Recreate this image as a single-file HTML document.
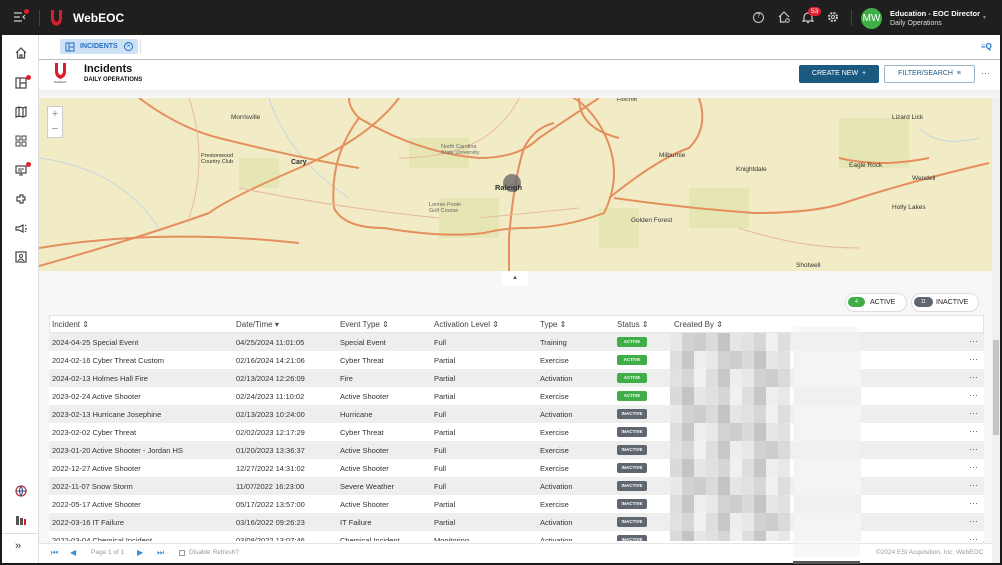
<!DOCTYPE html>
<html><head><meta charset="utf-8"><style>
*{box-sizing:border-box;margin:0;padding:0}
body{width:1002px;height:565px;overflow:hidden;background:#1a1a1a;font-family:"Liberation Sans",sans-serif;position:relative}
.abs{position:absolute}
.top{left:0;top:0;width:1002px;height:35px;background:#1f1f1f;color:#fff}
.side{left:2px;top:35px;width:37px;height:528px;background:#fff;border-right:1px solid #ddd}
.main{left:39px;top:35px;width:961px;height:528px;background:#fff}
.ic{position:absolute;left:12px;width:14px;height:14px}
.dot{position:absolute;width:5px;height:5px;border-radius:50%;background:#e0202e}
.row{position:absolute;left:49px;width:935px;height:18px;font-size:7.5px;color:#333}
.row span{position:absolute;top:5px;white-space:nowrap}
.badge{position:absolute;top:4px!important;left:568px;width:30px;height:10px;border-radius:2px;color:#fff;font-size:4.5px!important;font-weight:bold;text-align:center;line-height:10px}
.ml{position:absolute;font-size:6.5px;color:#333;white-space:nowrap}
</style></head><body>
<div class="abs top">
 <svg class="abs" style="left:14px;top:12px" width="12" height="10"><path d="M0 1h8M0 5h6M0 9h8M11 3l-2 2 2 2" stroke="#ccc" stroke-width="1.2" fill="none"/></svg>
 <div class="dot" style="left:24px;top:9px"></div>
 <div class="abs" style="left:39px;top:10px;width:1px;height:16px;background:#444"></div>
 <svg class="abs" style="left:51px;top:10px" width="11" height="16"><path d="M0 0h3v8q0 3 2.5 4q2.5-1 2.5-4V0h3v9q0 5-5.5 7Q0 14 0 9z" fill="#d71f2b"/></svg>
 <div class="abs" style="left:73px;top:11px;font-size:12px;font-weight:bold">WebEOC</div>
 <div class="abs" style="left:753px;top:12px;width:11px;height:11px;border:1.3px solid #ccc;border-radius:50%;font-size:7px;text-align:center;line-height:8px;color:#ccc">?</div>
 <svg class="abs" style="left:778px;top:11px" width="12" height="12"><path d="M1 6l5-5 5 5M2.5 5v6h5" stroke="#ccc" stroke-width="1.2" fill="none"/><circle cx="9.5" cy="9.5" r="1.8" stroke="#ccc" fill="none"/></svg>
 <svg class="abs" style="left:802px;top:11px" width="12" height="13"><path d="M2 9V6a4 4 0 018 0v3l1 1H1zM5 11.5h2" stroke="#ccc" stroke-width="1.2" fill="none"/></svg>
 <div class="abs" style="left:808px;top:7px;background:#e0202e;border-radius:6px;font-size:6.5px;padding:1px 3px">53</div>
 <svg class="abs" style="left:827px;top:11px" width="12" height="12"><circle cx="6" cy="6" r="4" stroke="#ccc" stroke-width="2" stroke-dasharray="2 1.2" fill="none"/><circle cx="6" cy="6" r="1.5" stroke="#ccc" fill="none"/></svg>
 <div class="abs" style="left:851px;top:10px;width:1px;height:16px;background:#444"></div>
 <div class="abs" style="left:861px;top:8px;width:21px;height:21px;border-radius:50%;background:#3fae49;font-size:10px;text-align:center;line-height:21px">MW</div>
 <div class="abs" style="left:890px;top:9px;font-size:7.5px;font-weight:bold">Education - EOC Director</div>
 <div class="abs" style="left:890px;top:20px;font-size:7px;color:#ddd">Daily Operations</div>
 <div class="abs" style="left:983px;top:14px;font-size:6px;color:#888">▾</div>
</div>
<div class="abs side">
 <svg class="ic" style="top:11px" viewBox="0 0 14 14"><path d="M2 7l5-5 5 5M3.5 6v6h7V6M6 12V9h2v3" stroke="#444" stroke-width="1.2" fill="none"/></svg>
 <svg class="ic" style="top:41px" viewBox="0 0 14 14"><rect x="2" y="2" width="10" height="10" stroke="#444" stroke-width="1.2" fill="none"/><path d="M6 2v10M6 7h6" stroke="#444" stroke-width="1.2"/></svg>
 <div class="dot" style="left:24px;top:40px"></div>
 <svg class="ic" style="top:70px" viewBox="0 0 14 14"><path d="M2 3l3-1 4 1 3-1v9l-3 1-4-1-3 1zM5 2v10M9 3v9" stroke="#444" stroke-width="1.2" fill="none"/></svg>
 <svg class="ic" style="top:99px" viewBox="0 0 14 14"><rect x="2" y="2" width="4" height="4" stroke="#444" fill="none"/><rect x="8" y="2" width="4" height="4" stroke="#444" fill="none"/><rect x="2" y="8" width="4" height="4" stroke="#444" fill="none"/><rect x="8" y="8" width="4" height="4" stroke="#444" fill="none"/></svg>
 <svg class="ic" style="top:128px" viewBox="0 0 14 14"><rect x="2" y="3" width="10" height="7" stroke="#444" stroke-width="1.2" fill="none"/><path d="M4 6h6M4 8h4M7 10v2M5 12h4" stroke="#444"/></svg>
 <div class="dot" style="left:24px;top:127px"></div>
 <svg class="ic" style="top:157px" viewBox="0 0 14 14"><path d="M3 5h3V3h3v2h2v3H9v3H6V9H3z" stroke="#444" stroke-width="1.2" fill="none"/></svg>
 <svg class="ic" style="top:186px" viewBox="0 0 14 14"><path d="M2 6h3l4-2v7l-4-2H2zM11 5l1-1M11 8h2M11 10l1 1" stroke="#444" stroke-width="1.2" fill="none"/></svg>
 <svg class="ic" style="top:215px" viewBox="0 0 14 14"><rect x="2" y="2" width="10" height="10" stroke="#444" stroke-width="1.2" fill="none"/><circle cx="7" cy="6" r="1.5" stroke="#444" fill="none"/><path d="M4 11q3-4 6 0" stroke="#444" fill="none"/></svg>
 <svg class="ic" style="top:449px" viewBox="0 0 14 14"><circle cx="7" cy="7" r="5" stroke="#c0303a" stroke-width="1.3" fill="none"/><path d="M2 7h10M7 2q-3 5 0 10M7 2q3 5 0 10" stroke="#2b4a8a" fill="none"/></svg>
 <svg class="ic" style="top:478px" viewBox="0 0 14 14"><rect x="2" y="3" width="3" height="9" fill="#555"/><rect x="6" y="5" width="3" height="7" fill="#555"/><rect x="10" y="6" width="2" height="6" fill="#d71f2b"/></svg>
 <div class="abs" style="left:0;top:498px;width:36px;height:1px;background:#ddd"></div>
 <div class="abs" style="left:13px;top:505px;font-size:11px;color:#444">»</div>
</div>
<div class="abs main">
 <div class="abs" style="left:21px;top:4px;width:78px;height:15px;background:#cfe2f5;border-radius:2px"></div>
 <svg class="abs" style="left:26px;top:7px" width="10" height="10"><rect x="1" y="1" width="8" height="8" stroke="#1f6fc4" fill="none"/><path d="M4 1v8M4 5h5" stroke="#1f6fc4"/></svg>
 <div class="abs" style="left:41px;top:8px;font-size:7px;color:#1f6fc4;font-weight:bold">INCIDENTS</div>
 <div class="abs" style="left:85px;top:7px;width:9px;height:9px;border:1px solid #1f6fc4;border-radius:50%;font-size:7px;color:#1f6fc4;line-height:7px;text-align:center">×</div>
 <div class="abs" style="left:101px;top:4px;width:1px;height:15px;background:#ddd"></div>
 <div class="abs" style="left:942px;top:7px;font-size:8px;color:#1f6fc4;font-weight:bold">≡Q</div>
 <div class="abs" style="left:0;top:24px;width:961px;height:1px;background:#bbb"></div>
 <svg class="abs" style="left:16px;top:28px" width="11" height="16"><path d="M0 0h3v8q0 3 2.5 4q2.5-1 2.5-4V0h3v9q0 5-5.5 7Q0 14 0 9z" fill="#d71f2b"/></svg>
 <div class="abs" style="left:15px;top:45px;font-size:3px;color:#333">WebEOC</div>
 <div class="abs" style="left:45px;top:28px;font-size:11px;font-weight:bold;color:#111">Incidents</div>
 <div class="abs" style="left:45px;top:42px;font-size:6px;font-weight:bold;color:#111">DAILY OPERATIONS</div>
 <div class="abs" style="left:760px;top:30px;width:80px;height:18px;background:#1b5a80;border-radius:2px;color:#fff;font-size:7px;line-height:18px;text-align:center">CREATE NEW &nbsp;+</div>
 <div class="abs" style="left:845px;top:30px;width:91px;height:18px;border:1px solid #9bb5c8;border-radius:2px;color:#1b5a80;font-size:7px;line-height:16px;text-align:center">FILTER/SEARCH &nbsp;≡</div>
 <div class="abs" style="left:942px;top:33px;font-size:9px;color:#555">···</div>
 <div class="abs" style="left:0;top:55px;width:961px;height:8px;background:linear-gradient(#eee,#f7f7f7)"></div>
 <div class="abs" style="left:0;top:63px;width:953px;height:173px;background:#f2ecc6;overflow:hidden">
  <svg width="953" height="173" style="position:absolute;left:0;top:0">
   <g fill="#e2e5b0" opacity=".8"><rect x="370" y="40" width="60" height="30"/><rect x="400" y="100" width="60" height="40"/><rect x="200" y="60" width="40" height="30"/><rect x="650" y="90" width="60" height="40"/><rect x="800" y="20" width="70" height="50"/><rect x="560" y="110" width="40" height="40"/></g>
   <g stroke="#b6d3e8" stroke-width=".8" fill="none"><path d="M0 60q80 10 120 70M230 0q20 60 80 100M880 30q20 20 60 10"/></g>
   <g stroke="#e58e5e" stroke-width="2" fill="none">
    <path d="M0 168Q100 140 170 115"/>
    <path d="M170 115Q190 100 260 70 330 40 360 0"/>
    <path d="M310 0q0 10 10 20 -30 40 -25 90 10 20 50 20 60 10 100 5 20-5 40 -5 40 0 80 -15 20-40 0-80 -15-30 -40-40 -20 -10 -40 -10"/>
    <path d="M320 20Q380 55 440 60 480 60 500 40 530 20 560 0"/>
    <path d="M470 173V140q5-60 15-90 10-20 30-25"/>
    <path d="M575 100q70 10 140 15 60 0 90-10 60-20 145-40"/>
    <path d="M540 0q0 30 40 40"/>
    <path d="M0 150q120-20 260-5"/>
    <path d="M100 0q40 30 80 40 80 20 140 30"/>
    <path d="M660 0q10 30 -10 50 -30 10 -80 50"/>
    <path d="M800 60q40 10 90 0"/>
   </g>
   <g stroke="#e9b9a0" stroke-width="1" fill="none"><path d="M150 0q20 60 0 120M480 0q-30 60 -120 60M700 130q60 20 120 20M200 90q100 20 200 30M440 120q50-5 100-10"/></g>
   <circle cx="473" cy="85" r="9" fill="#6a6a6a" opacity=".8"/>
  </svg>
  <div class="abs" style="left:8px;top:8px;width:16px;height:32px;background:#fff;border:1px solid #ccc;font-size:11px;color:#888;text-align:center;line-height:15px">+<br>−</div>
  <div class="ml" style="left:192px;top:16px">Morrisville</div>
  <div class="ml" style="left:162px;top:55px;font-size:5.5px">Prestonwood<br>Country Club</div>
  <div class="ml" style="left:252px;top:61px;font-weight:bold;font-size:7px">Cary</div>
  <div class="ml" style="left:402px;top:46px;font-size:5.5px;color:#666">North Carolina<br>State University</div>
  <div class="ml" style="left:456px;top:85px;font-weight:bold;font-size:7.5px">Raleigh</div>
  <div class="ml" style="left:578px;top:-1px;font-size:5.5px">Foxcroft</div>
  <div class="ml" style="left:620px;top:54px">Milburnie</div>
  <div class="ml" style="left:697px;top:68px">Knightdale</div>
  <div class="ml" style="left:853px;top:16px">Lizard Lick</div>
  <div class="ml" style="left:810px;top:64px">Eagle Rock</div>
  <div class="ml" style="left:873px;top:77px">Wendell</div>
  <div class="ml" style="left:853px;top:106px">Holly Lakes</div>
  <div class="ml" style="left:592px;top:119px">Golden Forest</div>
  <div class="ml" style="left:757px;top:164px">Shotwell</div>
  <div class="ml" style="left:390px;top:104px;font-size:5.5px;color:#666">Lonnie Poole<br>Golf Course</div>
 </div>
 <div class="abs" style="left:953px;top:63px;width:8px;height:465px;background:#f0f0f0"></div>
 <div class="abs" style="left:954px;top:305px;width:6px;height:95px;background:#c4c4c4"></div>
 <div class="abs" style="left:0;top:236px;width:953px;height:292px;background:#f7f7f7"></div>
 <div class="abs" style="left:463px;top:236px;width:26px;height:15px;background:#fff;font-size:6px;color:#555;text-align:center;line-height:14px">▲</div>
 <div class="abs" style="left:806px;top:258px;width:62px;height:19px;border:1px solid #ddd;border-radius:10px;background:#fff"></div>
 <div class="abs" style="left:809px;top:262px;width:17px;height:10px;border-radius:5px;background:#3fae49;color:#fff;font-size:5px;text-align:center;line-height:10px">4</div>
 <div class="abs" style="left:831px;top:264px;font-size:7px;color:#222">ACTIVE</div>
 <div class="abs" style="left:872px;top:258px;width:68px;height:19px;border:1px solid #ddd;border-radius:10px;background:#fff"></div>
 <div class="abs" style="left:875px;top:262px;width:19px;height:10px;border-radius:5px;background:#5f6670;color:#fff;font-size:5px;text-align:center;line-height:10px">11</div>
 <div class="abs" style="left:897px;top:264px;font-size:7px;color:#222">INACTIVE</div>
 <div class="abs" style="left:10px;top:280px;width:935px;height:248px;background:#fff;border:1px solid #e3e3e3"></div>
 <div class="abs" style="left:0;top:508px;width:953px;height:20px;background:#fff;border-top:1px solid #e5e5e5"></div>
 <div class="abs" style="left:12px;top:513px;font-size:8px;color:#3d8fd1">⏮</div>
 <div class="abs" style="left:31px;top:513px;font-size:8px;color:#3d8fd1">◀</div>
 <div class="abs" style="left:52px;top:514px;font-size:6.5px;color:#999">Page 1 of 1</div>
 <div class="abs" style="left:98px;top:513px;font-size:8px;color:#3d8fd1">▶</div>
 <div class="abs" style="left:118px;top:513px;font-size:8px;color:#3d8fd1">⏭</div>
 <div class="abs" style="left:140px;top:515px;width:6px;height:6px;border:1px solid #999"></div>
 <div class="abs" style="left:150px;top:514px;font-size:6.5px;color:#999">Disable Refresh?</div>
 <div class="abs" style="left:837px;top:514px;font-size:6.5px;color:#999">©2024 ESi Acquisition, Inc. WebEOC</div>
</div>
<div class="row" style="top:316px;height:17px;font-size:8px;color:#444;border-bottom:1px solid #e5e5e5"><span style="left:3px;top:4px">Incident ⇕</span><span style="left:187px;top:4px">Date/Time ▾</span><span style="left:291px;top:4px">Event Type ⇕</span><span style="left:385px;top:4px">Activation Level ⇕</span><span style="left:491px;top:4px">Type ⇕</span><span style="left:568px;top:4px">Status ⇕</span><span style="left:625px;top:4px">Created By ⇕</span></div>
<div id="rows"></div>
<script>
var d=[["2024-04-25 Special Event","04/25/2024 11:01:05","Special Event","Full","Training",1],
["2024-02-16 Cyber Threat Custom","02/16/2024 14:21:06","Cyber Threat","Partial","Exercise",1],
["2024-02-13 Holmes Hall Fire","02/13/2024 12:26:09","Fire","Partial","Activation",1],
["2023-02-24 Active Shooter","02/24/2023 11:10:02","Active Shooter","Partial","Exercise",1],
["2023-02-13 Hurricane Josephine","02/13/2023 10:24:00","Hurricane","Full","Activation",0],
["2023-02-02 Cyber Threat","02/02/2023 12:17:29","Cyber Threat","Partial","Exercise",0],
["2023-01-20 Active Shooter - Jordan HS","01/20/2023 13:36:37","Active Shooter","Full","Exercise",0],
["2022-12-27 Active Shooter","12/27/2022 14:31:02","Active Shooter","Full","Exercise",0],
["2022-11-07 Snow Storm","11/07/2022 16:23:00","Severe Weather","Full","Activation",0],
["2022-05-17 Active Shooter","05/17/2022 13:57:00","Active Shooter","Partial","Exercise",0],
["2022-03-16 IT Failure","03/16/2022 09:26:23","IT Failure","Partial","Activation",0],
["2022-03-04 Chemical Incident","03/08/2022 13:07:46","Chemical Incident","Monitoring","Activation",0]];
var h="",g=[232,214,205,222,196,238,225,210,240,218,200,230];
d.forEach(function(r,i){var t=333+i*18,hh=(i==11?10:18);
var px="";for(var k=0;k<10;k++){var c=g[(i*3+k*7)%12];px+='<div style="position:absolute;left:'+(621+k*12)+'px;top:0;width:12px;height:'+hh+'px;background:rgb('+c+','+c+','+c+')"></div>';}
px+='<div style="position:absolute;left:745px;top:0;width:67px;height:'+hh+'px;background:'+(i%3==0?'#ececec':'#f4f4f4')+'"></div>';
h+='<div class="row" style="top:'+t+'px;height:'+hh+'px;overflow:hidden;background:'+(i%2?'#fff':'#eeeeee')+'">'+px+'<span style="left:3px">'+r[0]+'</span><span style="left:187px">'+r[1]+'</span><span style="left:291px">'+r[2]+'</span><span style="left:385px">'+r[3]+'</span><span style="left:491px">'+r[4]+'</span><span class="badge" style="left:568px;background:'+(r[5]?'#3fae49':'#5f6670')+'">'+(r[5]?'ACTIVE':'INACTIVE')+'</span><span style="left:920px;top:3px;font-size:9px;color:#555">···</span></div>';});
document.getElementById('rows').innerHTML=h;
</script>
<div class="abs" style="left:793px;top:327px;width:67px;height:230px;background:#f3f3f3;opacity:.6"></div>
<div class="abs" style="left:793px;top:561px;width:67px;height:3px;background:#555"></div>
</body></html>
